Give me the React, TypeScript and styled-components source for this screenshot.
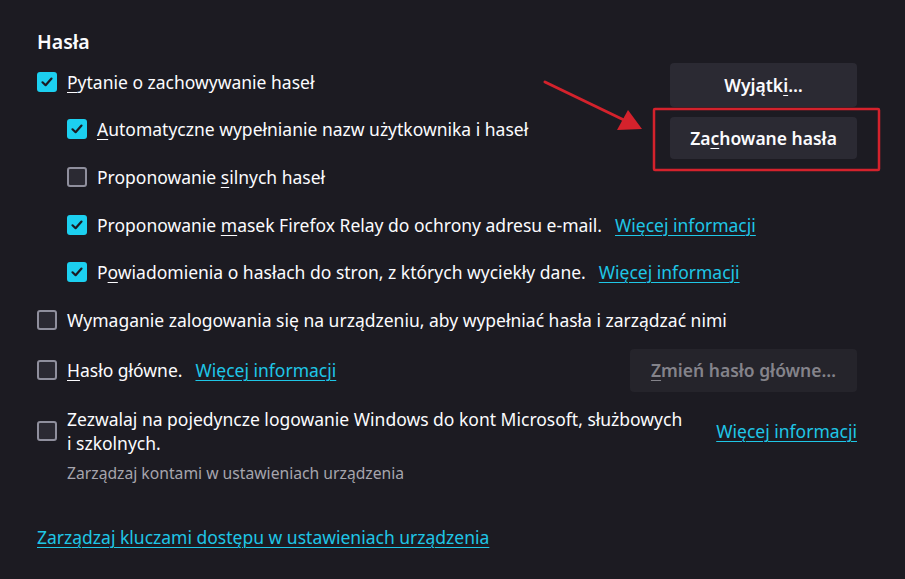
import React from 'react';
import styled, { createGlobalStyle } from 'styled-components';

const GlobalStyle = createGlobalStyle`
  html, body {
    margin: 0;
    padding: 0;
    background: #1c1b22;
  }
  body {
    font-family: "Noto Sans", "Open Sans", sans-serif;
    color: #fbfbfe;
  }
`;

const Page = styled.div`
  position: relative;
  box-sizing: border-box;
  width: 905px;
  height: 579px;
  padding: 28px 48px 0 37px;
  background: #1c1b22;
  font-size: 17.5px;
  overflow: hidden;
`;

const Heading = styled.h2`
  margin: 0 0 2px;
  font-size: 19.5px;
  font-weight: 600;
  line-height: 28px;
`;

const TopBlock = styled.div`
  display: grid;
  grid-template-columns: minmax(0, 1fr) 187px;
  align-items: start;
`;

const Column = styled.div`
  display: flex;
  flex-direction: column;
`;

const ButtonColumn = styled.div`
  display: flex;
  flex-direction: column;
  gap: 10px;
  padding-top: 5px;
`;

const Row = styled.div<{ $indent?: boolean }>`
  display: flex;
  align-items: center;
  gap: 10px;
  min-height: 47.6px;
  padding-left: ${(p) => (p.$indent ? '30px' : '0')};
  line-height: 24px;
  white-space: nowrap;
`;

const SplitRow = styled.div<{ $top?: number }>`
  display: flex;
  align-items: center;
  justify-content: space-between;
  gap: 16px;
  margin-top: ${(p) => p.$top ?? 0}px;
`;

const Box = styled.span<{ $checked?: boolean }>`
  flex: none;
  box-sizing: border-box;
  width: 20px;
  height: 20px;
  border-radius: 3px;
  display: inline-flex;
  align-items: center;
  justify-content: center;
  background: ${(p) => (p.$checked ? '#1cd0f0' : '#2b2a33')};
  border: ${(p) => (p.$checked ? 'none' : '2px solid #8f8f9d')};
`;

const Label = styled.span`
  color: #fbfbfe;
`;

const Key = styled.span`
  text-decoration: underline;
  text-underline-offset: 3px;
  text-decoration-thickness: 1px;
`;

const Link = styled.a`
  color: #1fc6e6;
  text-decoration: underline;
  text-underline-offset: 3px;
  text-decoration-thickness: 1px;
  margin-left: 3px;
  cursor: pointer;
`;

const Button = styled.button<{ $disabled?: boolean; $h?: number }>`
  box-sizing: border-box;
  height: ${(p) => p.$h ?? 44}px;
  padding: 0 16px;
  border: none;
  border-radius: 4px;
  background: ${(p) => (p.$disabled ? '#25242b' : '#2b2a33')};
  color: ${(p) => (p.$disabled ? '#84838a' : '#fbfbfe')};
  font-family: inherit;
  font-size: 17.5px;
  font-weight: 600;
  white-space: nowrap;
`;

const WideButton = styled(Button)`
  width: 227px;
`;

const TextStack = styled.div`
  display: flex;
  flex-direction: column;
  line-height: 24px;
`;

const Note = styled.div`
  color: #a6a5ad;
  font-size: 15.7px;
  line-height: 24px;
  padding-left: 30px;
  margin-top: 6px;
`;

const BottomLink = styled(Link)`
  display: inline-block;
  margin: 40px 0 0;
  line-height: 24px;
`;

const Annotation = styled.svg`
  position: absolute;
  left: 0;
  top: 0;
  pointer-events: none;
`;

const Check: React.FC = () => (
  <svg width="14" height="14" viewBox="0 0 14 14">
    <path d="M2.5 7.3 L5.6 10.2 L11.5 3.6" fill="none" stroke="#1c1b22" strokeWidth="2.2" strokeLinecap="round" strokeLinejoin="round" />
  </svg>
);

const CheckBox: React.FC<{ checked?: boolean }> = ({ checked }) => (
  <Box $checked={checked}>{checked && <Check />}</Box>
);

export default function App() {
  return (
    <Page>
      <GlobalStyle />
      <Heading>Hasła</Heading>
      <TopBlock>
        <Column>
          <Row>
            <CheckBox checked />
            <Label><Key>P</Key>ytanie o zachowywanie haseł</Label>
          </Row>
          <Row $indent>
            <CheckBox checked />
            <Label><Key>A</Key>utomatyczne wypełnianie nazw użytkownika i haseł</Label>
          </Row>
          <Row $indent>
            <CheckBox />
            <Label>Proponowanie <Key>s</Key>ilnych haseł</Label>
          </Row>
          <Row $indent>
            <CheckBox checked />
            <Label>
              Proponowanie <Key>m</Key>asek Firefox Relay do ochrony adresu e-mail.
            </Label>
            <Link>Więcej informacji</Link>
          </Row>
          <Row $indent>
            <CheckBox checked />
            <Label>
              P<Key>o</Key>wiadomienia o hasłach do stron, z których wyciekły dane.
            </Label>
            <Link>Więcej informacji</Link>
          </Row>
        </Column>
        <ButtonColumn>
          <Button>Wyjątk<Key>i</Key>…</Button>
          <Button $h={42}>Za<Key>c</Key>howane hasła</Button>
        </ButtonColumn>
      </TopBlock>
      <Row>
        <CheckBox />
        <Label>Wymaganie zalogowania się na urządzeniu, aby wypełniać hasła i zarządzać nimi</Label>
      </Row>
      <SplitRow $top={3}>
        <Row>
          <CheckBox />
          <Label><Key>H</Key>asło główne.</Label>
          <Link>Więcej informacji</Link>
        </Row>
        <WideButton $disabled $h={43}><Key>Z</Key>mień hasło główne…</WideButton>
      </SplitRow>
      <SplitRow $top={13}>
        <Row>
          <CheckBox />
          <TextStack>
            <Label>Zezwalaj na pojedyncze logowanie Windows do kont Microsoft, służbowych</Label>
            <Label>i szkolnych.</Label>
          </TextStack>
        </Row>
        <Link>Więcej informacji</Link>
      </SplitRow>
      <Note>Zarządzaj kontami w ustawieniach urządzenia</Note>
      <BottomLink>Zarządzaj kluczami dostępu w ustawieniach urządzenia</BottomLink>
      <Annotation width="905" height="579" viewBox="0 0 905 579">
        <rect x="654" y="109" width="225" height="61" rx="1" fill="none" stroke="#d4222c" strokeWidth="2.5" />
        <line x1="545" y1="82" x2="626" y2="121" stroke="#d4222c" strokeWidth="3" strokeLinecap="round" />
        <polygon points="642,129 617,130 628,110" fill="#d4222c" />
      </Annotation>
    </Page>
  );
}
